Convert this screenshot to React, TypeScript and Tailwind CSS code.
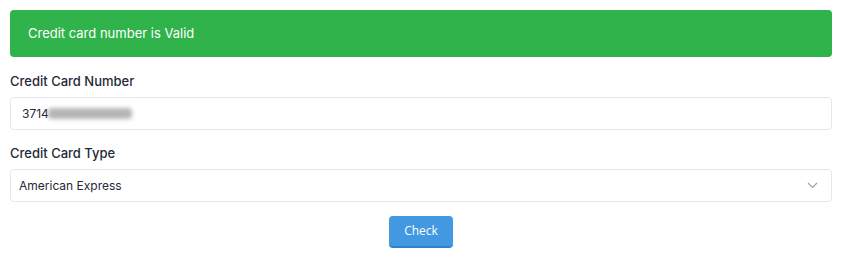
import * as React from 'react';

export default function App() {
  return (
    <div className="w-[847px] h-[257px] bg-white pl-[10px] pt-[10px] font-['Inter','Noto_Sans',sans-serif]">
      <div className="w-[822px]">
        <div className="h-[47px] rounded bg-[#2fb34a] text-white text-[13px] flex items-center pl-[18px]">
          Credit card number is Valid
        </div>

        <label className="block mt-[16px] text-[13px] font-medium text-[#1f2937] leading-[16px]">
          Credit Card Number
        </label>
        <div className="mt-[8px] h-[33px] rounded border border-[#e2e8f0] flex items-center pl-[11px] text-[12px] text-[#1f2937]">
          <span>3714</span>
          <span className="-ml-[1px] w-[84px] h-[11px] rounded-sm bg-[#a3a3a3] blur-[2px] opacity-80" />
        </div>

        <label className="block mt-[15px] text-[13px] font-medium text-[#1f2937] leading-[16px]">
          Credit Card Type
        </label>
        <div className="mt-[8px] h-[33px] rounded border border-[#e2e8f0] flex items-center justify-between pl-[8px] pr-[13px] text-[12px] text-[#1f2937]">
          <span>American Express</span>
          <svg width="11" height="7" viewBox="0 0 11 7" fill="none" stroke="#9ca3af" strokeWidth="1.2">
            <path d="M1 1l4.5 4.5L10 1" />
          </svg>
        </div>

        <div className="flex justify-center mt-[14px]">
          <button className="w-[64px] h-[32px] rounded bg-[#4299e1] border-b-2 border-[#3182ce] text-white text-[12px] font-['Open_Sans',sans-serif]">
            Check
          </button>
        </div>
      </div>
    </div>
  );
}
